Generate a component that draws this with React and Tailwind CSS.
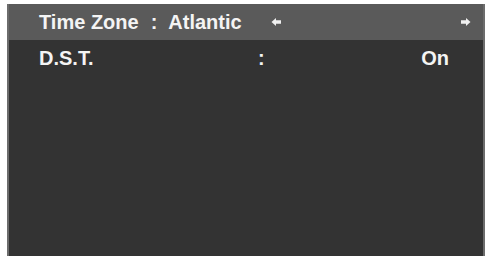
export default function App() {
  const Arrow = ({ dir }) => (
    <svg width="12" height="10" viewBox="0 0 12 10" className="block">
      {dir === "left" ? (
        <path d="M1.5 5 L6 1 L6 3.3 L11 3.3 L11 6.7 L6 6.7 L6 9 Z" fill="#f0f0f0" />
      ) : (
        <path d="M10.5 5 L6 1 L6 3.3 L1 3.3 L1 6.7 L6 6.7 L6 9 Z" fill="#f0f0f0" />
      )}
    </svg>
  );
  return (
    <div
      className="w-[490px] h-[256px] bg-white pt-[4px] pl-[7px] pr-[5px] overflow-hidden"
      style={{ fontFamily: '"Liberation Sans", Arial, sans-serif' }}
    >
      <div className="h-[252px] bg-[#333333] border-x-2 border-[#6c6c6c] flex flex-col">
        <div className="h-[36px] bg-[#5a5a5a] flex items-center pl-[30px] text-[20px] font-bold text-[#f4f4f4]">
          <span>Time Zone</span>
          <span className="ml-[12px]">:</span>
          <span className="ml-[11px]">Atlantic</span>
          <span className="ml-[28px]"><Arrow dir="left" /></span>
          <span className="ml-[178px]"><Arrow dir="right" /></span>
        </div>
        <div className="h-[36px] flex items-center pl-[30px] pr-[34px] text-[20px] font-bold text-[#f4f4f4]">
          <span className="w-[219px]">D.S.T.</span>
          <span>:</span>
          <span className="ml-auto">On</span>
        </div>
      </div>
    </div>
  );
}
